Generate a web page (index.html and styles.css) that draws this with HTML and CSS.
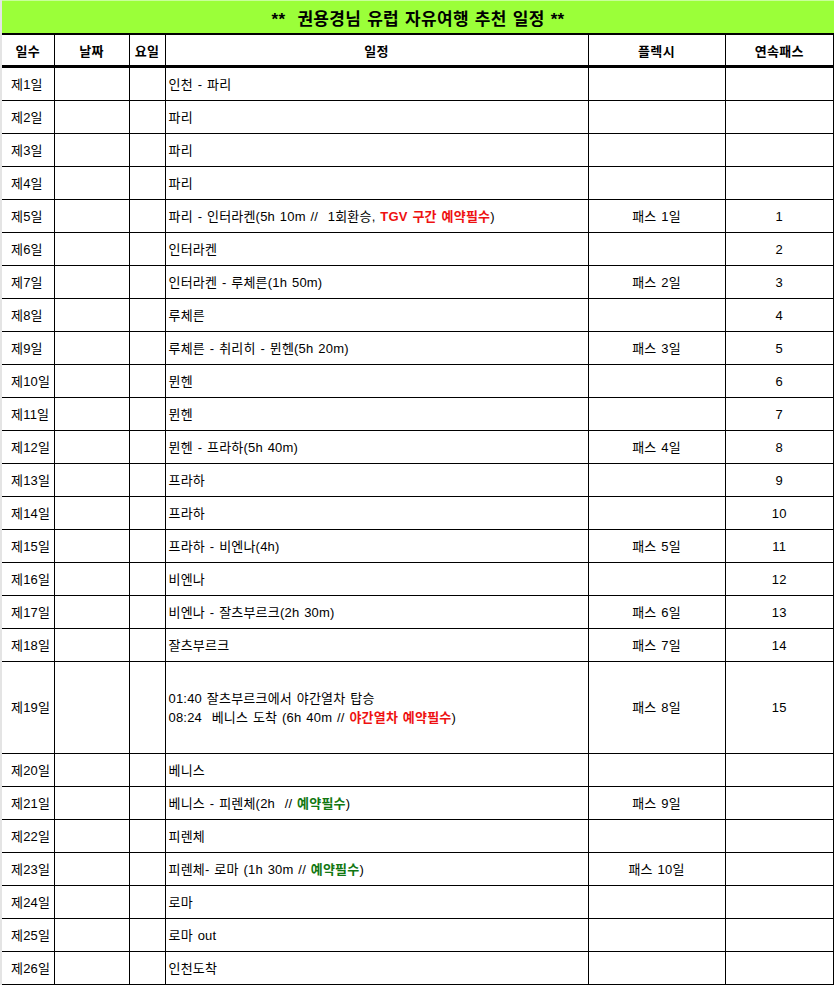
FILE: index.html
```html
<!DOCTYPE html>
<html lang="ko">
<head>
<meta charset="utf-8">
<title>권용경님 유럽 자유여행 추천 일정</title>
<link rel="stylesheet" href="styles.css">
</head>
<body>
<table class="plan">
  <colgroup>
    <col class="c-day"><col class="c-date"><col class="c-wd"><col class="c-plan"><col class="c-flex"><col class="c-pass">
  </colgroup>
  <thead>
    <tr class="title-row"><th colspan="6" class="title">**&nbsp; 권용경님 유럽 자유여행 추천 일정 **</th></tr>
    <tr class="head-row">
      <th>일수</th><th>날짜</th><th>요일</th><th>일정</th><th>플렉시</th><th>연속패스</th>
    </tr>
  </thead>
  <tbody>
    <tr><td class="day">제1일</td><td></td><td></td><td class="plan-cell">인천 - 파리</td><td></td><td></td></tr>
    <tr><td class="day">제2일</td><td></td><td></td><td class="plan-cell">파리</td><td></td><td></td></tr>
    <tr><td class="day">제3일</td><td></td><td></td><td class="plan-cell">파리</td><td></td><td></td></tr>
    <tr><td class="day">제4일</td><td></td><td></td><td class="plan-cell">파리</td><td></td><td></td></tr>
    <tr><td class="day">제5일</td><td></td><td></td><td class="plan-cell">파리 - 인터라켄(5h 10m //&nbsp; 1회환승, <span class="red">TGV 구간 예약필수</span>)</td><td class="center">패스 1일</td><td class="center">1</td></tr>
    <tr><td class="day">제6일</td><td></td><td></td><td class="plan-cell">인터라켄</td><td></td><td class="center">2</td></tr>
    <tr><td class="day">제7일</td><td></td><td></td><td class="plan-cell">인터라켄 - 루체른(1h 50m)</td><td class="center">패스 2일</td><td class="center">3</td></tr>
    <tr><td class="day">제8일</td><td></td><td></td><td class="plan-cell">루체른</td><td></td><td class="center">4</td></tr>
    <tr><td class="day">제9일</td><td></td><td></td><td class="plan-cell">루체른 - 취리히 - 뮌헨(5h 20m)</td><td class="center">패스 3일</td><td class="center">5</td></tr>
    <tr><td class="day">제10일</td><td></td><td></td><td class="plan-cell">뮌헨</td><td></td><td class="center">6</td></tr>
    <tr><td class="day">제11일</td><td></td><td></td><td class="plan-cell">뮌헨</td><td></td><td class="center">7</td></tr>
    <tr><td class="day">제12일</td><td></td><td></td><td class="plan-cell">뮌헨 - 프라하(5h 40m)</td><td class="center">패스 4일</td><td class="center">8</td></tr>
    <tr><td class="day">제13일</td><td></td><td></td><td class="plan-cell">프라하</td><td></td><td class="center">9</td></tr>
    <tr><td class="day">제14일</td><td></td><td></td><td class="plan-cell">프라하</td><td></td><td class="center">10</td></tr>
    <tr><td class="day">제15일</td><td></td><td></td><td class="plan-cell">프라하 - 비엔나(4h)</td><td class="center">패스 5일</td><td class="center">11</td></tr>
    <tr><td class="day">제16일</td><td></td><td></td><td class="plan-cell">비엔나</td><td></td><td class="center">12</td></tr>
    <tr><td class="day">제17일</td><td></td><td></td><td class="plan-cell">비엔나 - 잘츠부르크(2h 30m)</td><td class="center">패스 6일</td><td class="center">13</td></tr>
    <tr><td class="day">제18일</td><td></td><td></td><td class="plan-cell">잘츠부르크</td><td class="center">패스 7일</td><td class="center">14</td></tr>
    <tr class="tall"><td class="day">제19일</td><td></td><td></td><td class="plan-cell">01:40 잘츠부르크에서 야간열차 탑승<br>08:24&nbsp; 베니스 도착 (6h 40m // <span class="red">야간열차 예약필수</span>)</td><td class="center">패스 8일</td><td class="center">15</td></tr>
    <tr><td class="day">제20일</td><td></td><td></td><td class="plan-cell">베니스</td><td></td><td></td></tr>
    <tr><td class="day">제21일</td><td></td><td></td><td class="plan-cell">베니스 - 피렌체(2h&nbsp; // <span class="green">예약필수</span>)</td><td class="center">패스 9일</td><td></td></tr>
    <tr><td class="day">제22일</td><td></td><td></td><td class="plan-cell">피렌체</td><td></td><td></td></tr>
    <tr><td class="day">제23일</td><td></td><td></td><td class="plan-cell">피렌체- 로마 (1h 30m // <span class="green">예약필수</span>)</td><td class="center">패스 10일</td><td></td></tr>
    <tr><td class="day">제24일</td><td></td><td></td><td class="plan-cell">로마</td><td></td><td></td></tr>
    <tr><td class="day">제25일</td><td></td><td></td><td class="plan-cell">로마 out</td><td></td><td></td></tr>
    <tr><td class="day">제26일</td><td></td><td></td><td class="plan-cell">인천도착</td><td></td><td></td></tr>
  </tbody>
</table>
</body>
</html>
```

FILE: styles.css
```css
html, body {
  margin: 0;
  padding: 0;
  background: #ffffff;
}

body {
  font-family: "Liberation Sans", "Noto Sans CJK KR", sans-serif;
  font-size: 13px;
  color: #000000;
  border-left: 2px solid #e4e4e4;
  width: 832px;
}

.plan {
  border-collapse: collapse;
  table-layout: fixed;
  width: 832px;
}

.c-day { width: 52px; }
.c-date { width: 75px; }
.c-wd { width: 36px; }
.c-plan { width: 423px; }
.c-flex { width: 137px; }
.c-pass { width: 109px; }

.title-row th {
  height: 32px;
  padding: 0;
  background: #9bff39;
  border-top: 1px solid #c8ff9a;
  border-bottom: 2px solid #000000;
  font-size: 17px;
  font-weight: bold;
  letter-spacing: 0.3px;
  word-spacing: 1px;
  text-align: center;
  vertical-align: middle;
}

.head-row th {
  height: 30px;
  padding: 0;
  font-size: 13px;
  font-weight: bold;
  letter-spacing: 0.3px;
  text-align: center;
  vertical-align: middle;
  border-left: 1px solid #000000;
  border-bottom: 3px solid #000000;
}

.head-row th:first-child { border-left: none; }
.head-row th:last-child { border-right: 2px solid #000000; }

td {
  height: 32px;
  padding: 0;
  border-left: 1px solid #000000;
  border-bottom: 1px solid #000000;
  vertical-align: middle;
  white-space: nowrap;
  line-height: 19px;
  letter-spacing: 0.2px;
  word-spacing: 1px;
}

td:first-child { border-left: none; }
td:last-child { border-right: 2px solid #000000; }
tbody tr:last-child td { border-bottom: 2px solid #000000; }

.tall td { height: 91px; }

.day { padding-left: 9px; }
.plan-cell { padding-left: 3px; }
.center { text-align: center; }

.red { color: #ee1111; font-weight: bold; }
.green { color: #117711; font-weight: bold; }
```
